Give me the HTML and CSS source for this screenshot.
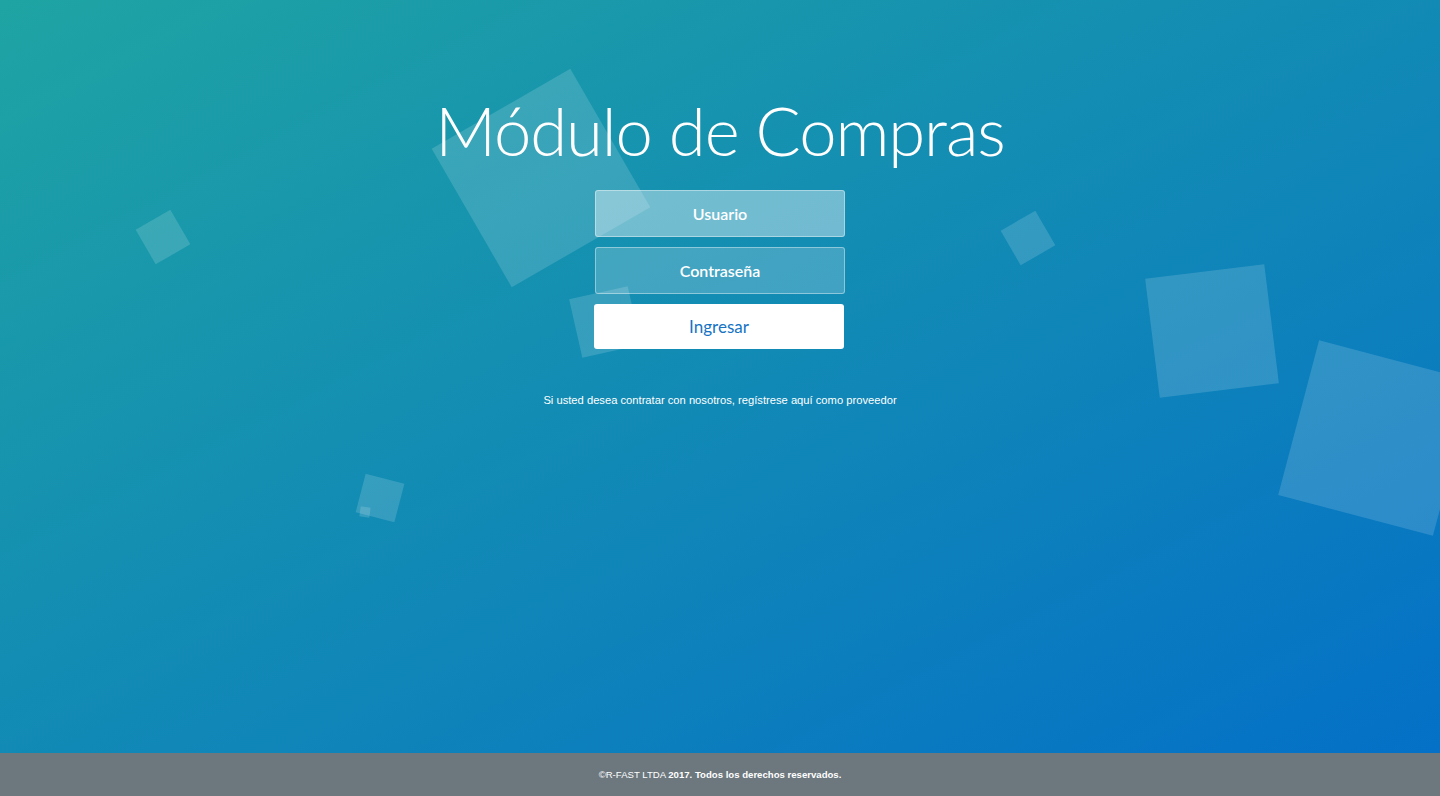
FILE: index.html
```html
<!DOCTYPE html>
<html lang="es">
<head>
<meta charset="utf-8">
<title>Módulo de Compras</title>
<link rel="stylesheet" href="styles.css">
</head>
<body>
<div class="page">
  <main class="hero">
    <ul class="bubbles" aria-hidden="true">
      <li class="bubble bubble--a"></li>
      <li class="bubble bubble--b"></li>
      <li class="bubble bubble--c"></li>
      <li class="bubble bubble--d"></li>
      <li class="bubble bubble--e"></li>
      <li class="bubble bubble--f"></li>
      <li class="bubble bubble--g"></li>
      <li class="bubble bubble--h"></li>
    </ul>
    <div class="container">
      <h1 class="title">Módulo de Compras</h1>
      <form class="form">
        <input class="field field--active" type="text" placeholder="Usuario">
        <input class="field" type="password" placeholder="Contraseña">
        <button class="btn" type="button">Ingresar</button>
      </form>
      <p class="register">Si usted desea contratar con nosotros, regístrese aquí como proveedor</p>
    </div>
  </main>
  <footer class="footer">
    <p class="copy">©R-FAST LTDA <strong>2017. Todos los derechos reservados.</strong></p>
  </footer>
</div>
</body>
</html>
```

FILE: styles.css
```css
* { box-sizing: border-box; }

html, body {
  margin: 0;
  padding: 0;
  height: 100%;
}

body {
  font-family: "Liberation Sans", Arial, sans-serif;
  color: #fff;
}

.page {
  display: flex;
  flex-direction: column;
  height: 100vh;
}

.hero {
  position: relative;
  flex: 1;
  overflow: hidden;
  background: linear-gradient(to bottom right, #1fa4a3 0%, #0470c7 100%);
}

.bubbles {
  position: absolute;
  inset: 0;
  margin: 0;
  padding: 0;
  list-style: none;
  z-index: 0;
}

.bubble {
  position: absolute;
  display: block;
  background: rgba(255, 255, 255, 0.15);
}

.bubble--a { left: 143px; top: 217px; width: 40px; height: 40px; transform: rotate(-30deg); }
.bubble--b { left: 1008px; top: 218px; width: 40px; height: 40px; transform: rotate(-30deg); }
.bubble--c { left: 360px; top: 478px; width: 40px; height: 40px; transform: rotate(14.5deg); }
.bubble--d { left: 360px; top: 507px; width: 10px; height: 10px; transform: rotate(8deg); }
.bubble--e { left: 1152px; top: 271px; width: 120px; height: 120px; transform: rotate(-7deg); }
.bubble--f { left: 1296px; top: 358px; width: 160px; height: 160px; transform: rotate(14.8deg); }
.bubble--g { left: 461px; top: 98px; width: 160px; height: 160px; transform: rotate(-30deg); }
.bubble--h { left: 575px; top: 292px; width: 60px; height: 60px; transform: rotate(-12.7deg); }

.container {
  position: relative;
  z-index: 1;
  display: flex;
  flex-direction: column;
  align-items: center;
  padding-top: 90px;
}

.title {
  margin: 0;
  font-family: Lato, "Open Sans", sans-serif;
  font-weight: 300;
  font-size: 67px;
  line-height: 80px;
  color: #fff;
  letter-spacing: -1.1px;
}

.form {
  display: flex;
  flex-direction: column;
  align-items: center;
  margin: 20px 0 0;
}

.field {
  display: block;
  width: 250px;
  height: 47px;
  margin: 0 0 10px;
  padding: 0 15px;
  border: 1px solid rgba(255, 255, 255, 0.4);
  border-radius: 3px;
  background: rgba(255, 255, 255, 0.2);
  font-family: Lato, "Open Sans", sans-serif;
  font-size: 16px;
  font-weight: 600;
  color: #fff;
  text-align: center;
  outline: none;
}

.field--active {
  background: rgba(255, 255, 255, 0.4);
}

.field::placeholder {
  color: #fff;
  opacity: 1;
}

.btn {
  display: block;
  width: 250px;
  height: 45px;
  margin: 0 2px 0 0;
  padding: 0;
  border: 0;
  border-radius: 3px;
  background: #fff;
  font-family: Lato, "Open Sans", sans-serif;
  font-size: 17px;
  font-weight: 400;
  color: #1673c4;
  cursor: pointer;
}

.register {
  margin: 44px 0 0;
  font-family: "Liberation Sans", Arial, sans-serif;
  font-size: 11.2px;
  line-height: 14px;
  color: #fff;
}

.footer {
  flex: 0 0 43px;
  display: flex;
  align-items: center;
  justify-content: center;
  background: #6c777e;
}

.copy {
  margin: 0;
  font-family: "Liberation Sans", Arial, sans-serif;
  font-size: 9.6px;
  line-height: 12px;
  color: #fff;
}

.copy strong {
  font-weight: 700;
}
```
